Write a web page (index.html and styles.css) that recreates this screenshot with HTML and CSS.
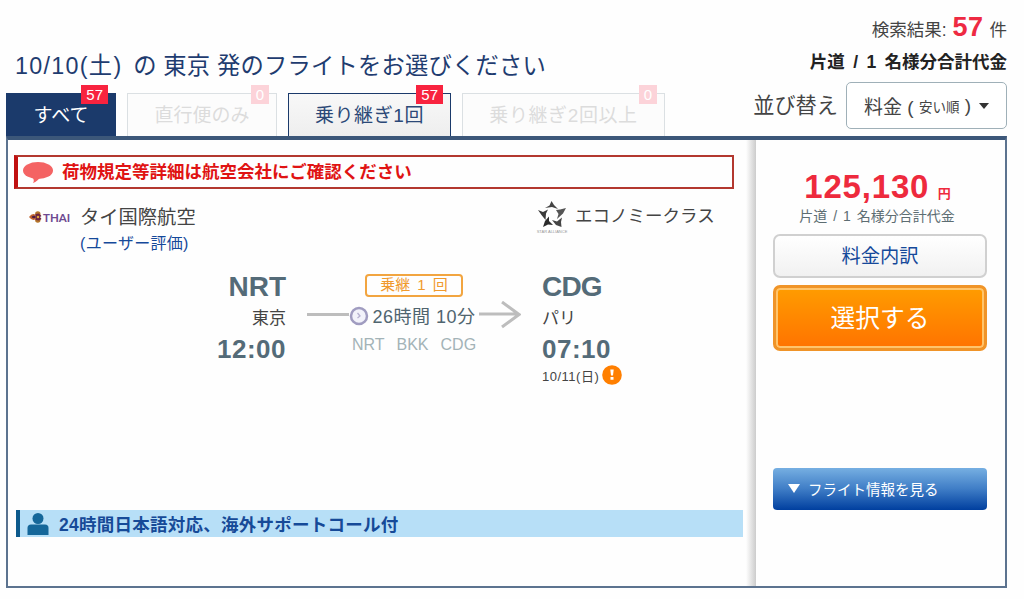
FILE: index.html
```html
<!DOCTYPE html>
<html lang="ja">
<head>
  <meta charset="UTF-8">
  <meta name="viewport" content="width=device-width, initial-scale=1.0">
  <title>フライト検索結果</title>
  <link rel="stylesheet" href="styles.css">
</head>
<body>
<div class="container">
  <div class="header">
    <div class="header-left">
      <h1 class="page-title"><span class="title-date">10/10(土)</span> の 東京 発のフライトをお選びください</h1>
      <div class="tabs">
        <div class="tab tab-all active"><span class="tab-text">すべて</span><span class="badge">57</span></div>
        <div class="tab tab-direct disabled"><span class="tab-text">直行便のみ</span><span class="badge">0</span></div>
        <div class="tab tab-one"><span class="tab-text">乗り継ぎ1回</span><span class="badge">57</span></div>
        <div class="tab tab-two disabled"><span class="tab-text">乗り継ぎ2回以上</span><span class="badge">0</span></div>
      </div>
    </div>
    <div class="header-right">
      <div class="result-count">検索結果: <strong>57</strong> 件</div>
      <div class="result-note">片道 / 1 名様分合計代金</div>
      <div class="sort">
        <span class="sort-label">並び替え</span>
        <button class="sort-btn">料金 ( <small>安い順</small> )<span class="caret"></span></button>
      </div>
    </div>
  </div>

  <div class="flight-card">
    <div class="flight-main">
      <div class="notice">
        <svg class="notice-icon" viewBox="0 0 30 22" width="30" height="22">
          <ellipse cx="15" cy="9.500" rx="15" ry="8.500" fill="#f46363"/>
          <path d="M9 16 Q12 19 10 22 Q15 20 17 16Z" fill="#f46363"/>
        </svg>
        <span class="notice-text">荷物規定等詳細は航空会社にご確認ください</span>
      </div>

      <div class="carrier">
        <div class="carrier-logo">
          <svg viewBox="0 0 13 12" width="13" height="12">
            <path d="M0 6 Q3 2 6 3.500 L7 6 L6 8.500 Q3 10 0 6Z" fill="#c0622f"/>
            <path d="M2.500 6 Q4.500 3.500 7 6 Q4.500 8.500 2.500 6Z" fill="#4b1a45"/>
            <circle cx="8.800" cy="3" r="2.700" fill="#b5752b"/>
            <circle cx="8.800" cy="9" r="2.700" fill="#b5752b"/>
            <path d="M6.500 3 L10 2.500 L12.500 5 L11 6 L12.500 8 L10 9.500 L6.500 9Z" fill="#6b2340"/>
            <circle cx="9" cy="6" r="1.300" fill="#e0a53a"/>
          </svg>
          <span class="logo-text">THAI</span>
        </div>
        <div class="carrier-name">
          <div class="airline">タイ国際航空</div>
          <a class="review" href="#">(ユーザー評価)</a>
        </div>
        <div class="alliance">
          <svg viewBox="0 0 28 27" width="28" height="27">
            <path d="M13.500 0 L16 4 L20 8 L14 6 L7 7 L11.500 4.500Z" fill="#444"/>
            <path d="M28 7 L25 12.500 L19 18 L20.500 13 L18 9 L22 8.500Z" fill="#555"/>
            <path d="M23.500 26 L18 24 L14 19 L19 20.500 L24 16.500 L23 21Z" fill="#444"/>
            <path d="M5 26 L7 20 L11 15.500 L11 20 L15 24 L10 23.500Z" fill="#2b2b2b"/>
            <path d="M0 9 L5 11 L10 8.500 L8 12.500 L7.500 19 L3.500 14Z" fill="#3a3a3a"/>
          </svg>
          <span class="alliance-text">STAR ALLIANCE</span>
        </div>
        <div class="seat-class">エコノミークラス</div>
      </div>

      <div class="route">
        <div class="airport departure">
          <div class="code">NRT</div>
          <div class="city">東京</div>
          <div class="time">12:00</div>
        </div>
        <div class="journey">
          <div class="stops">乗継 1 回</div>
          <div class="duration">
            <span class="line"></span>
            <svg class="clock" viewBox="0 0 20 20" width="20" height="20">
              <circle cx="10" cy="10" r="8" fill="#f2f2fa" stroke="#a09cc0" stroke-width="2.500"/>
              <path d="M8.500 7 L11 10 L8.500 12" fill="none" stroke="#b5b0cf" stroke-width="1.300"/>
            </svg>
            <span class="duration-text">26時間 10分</span>
            <svg class="arrow" viewBox="0 0 42 28" width="42" height="28">
              <path d="M0 13 H40 M23 1 L40 13.500 L23 26" fill="none" stroke="#bdbdbd" stroke-width="3"/>
            </svg>
          </div>
          <div class="via"><span>NRT</span><span>BKK</span><span>CDG</span></div>
        </div>
        <div class="airport arrival">
          <div class="code">CDG</div>
          <div class="city">パリ</div>
          <div class="time">07:10</div>
          <div class="next-day"><span class="next-date">10/11(日)</span>
            <svg viewBox="0 0 20 20" width="20" height="20">
              <circle cx="10" cy="10" r="9.800" fill="#ff7f00"/>
              <path d="M8.300 4.500 H11.700 L11 10.500 H9Z M8.500 12 H11.500 V14.800 H8.500Z" fill="#fff"/>
            </svg>
          </div>
        </div>
      </div>

      <div class="support">
        <svg viewBox="0 0 22 22" width="22" height="22">
          <circle cx="11" cy="5.500" r="5.500" fill="#15679a"/>
          <path d="M0.500 22 V15 Q0.500 11.500 4 11.500 H18 Q21.500 11.500 21.500 15 V22Z" fill="#15679a"/>
        </svg>
        <span class="support-text">24時間日本語対応、海外サポートコール付</span>
      </div>
    </div>

    <div class="flight-price">
      <div class="price"><span class="amount">125,130</span> <span class="yen">円</span></div>
      <div class="price-note">片道 / 1 名様分合計代金</div>
      <button class="btn-detail">料金内訳</button>
      <button class="btn-select">選択する</button>
      <button class="btn-info"><span class="triangle"></span><span class="info-text">フライト情報を見る</span></button>
    </div>
  </div>
</div>
</body>
</html>
```

FILE: styles.css
```css
* {
  margin: 0;
  padding: 0;
  box-sizing: border-box;
  font-family: 'Liberation Sans', 'Noto Sans CJK JP', sans-serif;
}

body {
  background-color: #fefefe;
  color: #444;
  height: 599px;
  overflow: hidden;
}

.container {
  width: 1001px;
  margin-left: 6px;
}

.header {
  display: flex;
  justify-content: space-between;
  height: 136px;
}

.header-left {
  display: flex;
  flex-direction: column;
  justify-content: space-between;
}

.page-title {
  margin-top: 48px;
  padding-left: 9px;
  font-size: 23.3px;
  font-weight: normal;
  line-height: 36px;
  letter-spacing: 0.2px;
  color: #1f3c70;
  white-space: nowrap;
}

.title-date {
  margin-right: 4px;
  letter-spacing: 1.3px;
}

.tabs {
  display: flex;
}

.tab {
  position: relative;
  height: 43px;
  margin-right: 11px;
  border: 1px solid #1b3a6b;
  border-bottom: none;
  background: linear-gradient(#f8f8f8, #eee);
  color: #2b4877;
  font-size: 19px;
  line-height: 43px;
  text-align: center;
  white-space: nowrap;
}

.tab-all {
  width: 110px;
}

.tab-direct {
  width: 150px;
}

.tab-one {
  width: 163px;
  letter-spacing: 0.6px;
}

.tab-two {
  width: 203px;
  letter-spacing: 0.6px;
}

.tab.active {
  background: #1b3a6b;
  color: #fff;
}

.tab.disabled {
  border-color: #dbe0e3;
  background: #fcfcfc;
  color: #dcdcdc;
}

.badge {
  position: absolute;
  top: -9px;
  right: 7px;
  height: 19px;
  padding: 0 5px;
  background: #f8233f;
  color: #fff;
  font-size: 15px;
  line-height: 19px;
  letter-spacing: 0;
}

.disabled .badge {
  background: #fcd3d9;
}

.header-right {
  text-align: right;
  white-space: nowrap;
  padding-top: 12px;
}

.result-count {
  font-size: 17.5px;
  line-height: 30px;
}

.result-count strong {
  margin: 0 1px;
  font-size: 27px;
  letter-spacing: 0.5px;
  color: #ee2a42;
}

.result-note {
  font-size: 17.5px;
  font-weight: bold;
  line-height: 26px;
  margin-top: 4px;
  word-spacing: 3.5px;
  color: #222;
}

.sort {
  display: flex;
  justify-content: flex-end;
  align-items: center;
  margin-top: 7px;
}

.sort-label {
  font-size: 21.2px;
  margin: -4px 8px 0 0;
}

.sort-btn {
  display: flex;
  align-items: center;
  justify-content: center;
  width: 161px;
  height: 47px;
  border: 1px solid #9fb0b8;
  border-radius: 5px;
  background: #fff;
  color: #444;
  font-size: 19px;
  white-space: pre;
}

.sort-btn small {
  font-size: 13.5px;
}

.caret {
  margin-left: 8px;
  border: 5px solid transparent;
  border-top: 6px solid #333;
  border-bottom: none;
}

.flight-card {
  display: flex;
  height: 452px;
  border: 2px solid #5c738f;
  border-top: 4px solid #3c5779;
}

.flight-main {
  width: 748px;
  padding: 15px 13px 0 6px;
  background: linear-gradient(to left, #ccc, #fefefe 10px);
}

.notice {
  display: flex;
  align-items: center;
  width: 720px;
  height: 34px;
  padding-left: 5px;
  border: 2px solid #b3382f;
  border-left: 4px solid #c01010;
}

.notice-text {
  margin: -3px 0 0 9px;
  font-size: 17.5px;
  font-weight: bold;
  color: #e01313;
}

.carrier {
  display: flex;
  height: 81px;
  padding: 12px 0 0 15px;
}

.carrier-logo {
  display: flex;
  align-items: center;
  width: 51px;
  height: 32px;
}

.logo-text {
  margin-left: 1px;
  font-family: 'Lato', sans-serif;
  font-size: 11.5px;
  font-weight: bold;
  color: #6e4a91;
}

.carrier-name {
  width: 458px;
}

.airline {
  font-size: 19.3px;
  line-height: 33px;
}

.review {
  display: block;
  font-size: 16px;
  line-height: 19px;
  letter-spacing: 0.3px;
  color: #15499a;
  text-decoration: none;
}

.alliance {
  display: flex;
  flex-direction: column;
  align-items: center;
  width: 28px;
}

.alliance-text {
  font-size: 4px;
  line-height: 7px;
  color: #999;
  white-space: nowrap;
}

.seat-class {
  margin-left: 9px;
  font-size: 17.5px;
  line-height: 30px;
}

.route {
  display: flex;
  height: 240px;
}

.airport .code {
  font-size: 28px;
  font-weight: bold;
  line-height: 34px;
  color: #546b78;
}

.airport .city {
  font-size: 17px;
  line-height: 30px;
}

.airport .time {
  font-size: 26px;
  font-weight: bold;
  line-height: 30px;
  letter-spacing: 0.5px;
  color: #546b78;
}

.departure {
  width: 272px;
  text-align: right;
}

.arrival .code {
  letter-spacing: -0.8px;
}

.journey {
  display: flex;
  flex-direction: column;
  align-items: center;
  width: 216px;
  margin: 4px 20px 0;
}

.stops {
  width: 98px;
  height: 23px;
  border: 2px solid #f2a540;
  border-radius: 4px;
  color: #f09a2d;
  font-size: 15px;
  line-height: 18px;
  word-spacing: 3px;
  text-align: center;
}

.duration {
  display: flex;
  align-items: center;
  height: 38px;
}

.line {
  width: 42px;
  height: 3px;
  margin-top: -4px;
  background: #bdbdbd;
}

.duration-text {
  margin: -3px 3px 0;
  font-size: 18px;
  letter-spacing: 0.5px;
  color: #50656f;
}

.arrow {
  margin-top: -2px;
}

.via {
  display: flex;
  gap: 12px;
  font-size: 16px;
  line-height: 20px;
  color: #a3b3b7;
}

.next-day {
  display: flex;
  align-items: center;
  gap: 3px;
  height: 22px;
}

.next-date {
  font-size: 13px;
  letter-spacing: 0.5px;
}

.support {
  display: flex;
  align-items: center;
  width: 727px;
  height: 27px;
  margin-left: 2px;
  padding-left: 7px;
  border-left: 4px solid #0d5a8c;
  background: #b7dff7;
}

.support-text {
  margin-left: 10px;
  font-size: 17.5px;
  font-weight: bold;
  letter-spacing: 0.25px;
  color: #164a98;
}

.flight-price {
  flex: 1;
  padding: 30px 18px 0 17px;
  text-align: center;
}

.price {
  height: 34px;
  margin-left: -5px;
  color: #ee2a3d;
  font-weight: bold;
  line-height: 33px;
}

.amount {
  margin-right: 4px;
  font-size: 33px;
  letter-spacing: 0.8px;
}

.yen {
  font-size: 13px;
}

.price-note {
  margin-left: -6px;
  font-size: 14px;
  line-height: 24px;
  word-spacing: 2px;
  color: #5d6d72;
}

.flight-price button {
  display: block;
  width: 214px;
}

.flight-price .btn-detail {
  height: 44px;
  margin-top: 6px;
  border: 2px solid #d0d0d0;
  border-radius: 7px;
  background: linear-gradient(#fff, #f1f1f1);
  padding-bottom: 3px;
  color: #15499a;
  font-size: 19.3px;
}

.flight-price .btn-select {
  height: 66px;
  margin-top: 7px;
  padding-bottom: 5px;
  border: 3px solid #f09428;
  border-radius: 7px;
  background: linear-gradient(#ff9c00, #ff7300);
  box-shadow: inset 0 0 0 2px #ffc46b;
  color: #fff;
  font-size: 24.7px;
}

.flight-price .btn-info {
  display: flex;
  align-items: center;
  height: 42px;
  margin-top: 117px;
  padding: 0 0 2px 15px;
  border: none;
  border-radius: 4px;
  background: linear-gradient(#76afe2, #3f7dc6 50%, #003f9f);
  color: #fff;
  font-size: 14.5px;
}

.triangle {
  margin-right: 8px;
  border: 6px solid transparent;
  border-top: 9px solid #fff;
  border-bottom: none;
}
```
